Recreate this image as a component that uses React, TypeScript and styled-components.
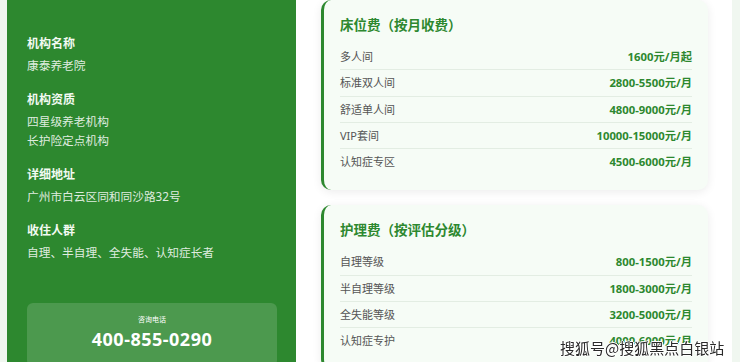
import React from 'react'
import styled, { createGlobalStyle } from 'styled-components'

const GlobalStyle = createGlobalStyle`
  html, body {
    margin: 0;
    padding: 0;
    background: #f0f7f0;
    font-family: "Noto Sans", "Noto Sans CJK SC", sans-serif;
    overflow: hidden;
  }
`

const Page = styled.div`
  display: flex;
  height: 362px;
  margin: 0 8px 0 7px;
  background: #ffffff;
`

const Sidebar = styled.aside`
  width: 289px;
  flex: 0 0 auto;
  background: #2d882f;
  padding: 35px 19px 0 20px;
  box-sizing: border-box;
  display: flex;
  flex-direction: column;
`

const InfoBlock = styled.div`
  margin-bottom: 16px;
`

const InfoLabel = styled.div`
  font-size: 12px;
  line-height: 18px;
  font-weight: 700;
  color: #f2faf2;
  margin-bottom: 3px;
`

const InfoValue = styled.div`
  font-size: 11.7px;
  line-height: 19px;
  color: rgba(255, 255, 255, 0.86);
`

const PhoneBox = styled.div`
  margin-top: 25px;
  background: rgba(255, 255, 255, 0.15);
  border-radius: 6px;
  padding: 12px 0 14px;
  text-align: center;
`

const PhoneLabel = styled.div`
  font-size: 7px;
  line-height: 10px;
  color: #ffffff;
`

const PhoneNumber = styled.div`
  font-size: 18px;
  line-height: 26px;
  font-weight: 700;
  color: #ffffff;
  letter-spacing: 0.5px;
  margin-top: 1px;
`

const Content = styled.main`
  flex: 1;
  padding: 0 24px 0 25px;
  display: flex;
  flex-direction: column;
  gap: 15px;
`

const Card = styled.section`
  background: #f6fcf6;
  border-left: 3px solid #2d882f;
  border-radius: 10px;
  box-shadow: 0 2px 10px rgba(0, 0, 0, 0.08);
  padding: 15px 16px 16px 16px;
`

const CardTitle = styled.h3`
  margin: 0 0 9px;
  font-size: 13.5px;
  line-height: 20px;
  font-weight: 700;
  color: #2d882f;
`

const Row = styled.div`
  display: flex;
  justify-content: space-between;
  align-items: center;
  padding: 6px 0;
  line-height: 13.25px;
  font-size: 11px;
  border-bottom: 1px solid #e3ede3;

  &:last-child {
    border-bottom: none;
  }
`

const RowName = styled.span`
  color: #555555;
`

const RowPrice = styled.span`
  color: #2d882f;
  font-weight: 700;
  font-size: 11.3px;
`

const Watermark = styled.div`
  position: fixed;
  left: 560px;
  top: 337px;
  font-size: 15px;
  line-height: 22px;
  color: #2a2a2a;
  font-family: "Noto Sans CJK SC", sans-serif;
  text-shadow: 1px 0 0 #fff, -1px 0 0 #fff, 0 1px 0 #fff, 0 -1px 0 #fff;
  white-space: nowrap;
`

const info = [
  { label: '机构名称', values: ['康泰养老院'] },
  { label: '机构资质', values: ['四星级养老机构', '长护险定点机构'] },
  { label: '详细地址', values: ['广州市白云区同和同沙路32号'] },
  { label: '收住人群', values: ['自理、半自理、全失能、认知症长者'] },
]

const bedFees = [
  ['多人间', '1600元/月起'],
  ['标准双人间', '2800-5500元/月'],
  ['舒适单人间', '4800-9000元/月'],
  ['VIP套间', '10000-15000元/月'],
  ['认知症专区', '4500-6000元/月'],
]

const careFees = [
  ['自理等级', '800-1500元/月'],
  ['半自理等级', '1800-3000元/月'],
  ['全失能等级', '3200-5000元/月'],
  ['认知症专护', '4000-6000元/月'],
]

function FeeCard({ title, rows }: { title: string; rows: string[][] }) {
  return (
    <Card>
      <CardTitle>{title}</CardTitle>
      {rows.map(([name, price]) => (
        <Row key={name}>
          <RowName>{name}</RowName>
          <RowPrice>{price}</RowPrice>
        </Row>
      ))}
    </Card>
  )
}

export default function App() {
  return (
    <>
      <GlobalStyle />
      <Page>
        <Sidebar>
          {info.map((item) => (
            <InfoBlock key={item.label}>
              <InfoLabel>{item.label}</InfoLabel>
              {item.values.map((v) => (
                <InfoValue key={v}>{v}</InfoValue>
              ))}
            </InfoBlock>
          ))}
          <PhoneBox>
            <PhoneLabel>咨询电话</PhoneLabel>
            <PhoneNumber>400-855-0290</PhoneNumber>
          </PhoneBox>
        </Sidebar>
        <Content>
          <FeeCard title="床位费（按月收费）" rows={bedFees} />
          <FeeCard title="护理费（按评估分级）" rows={careFees} />
        </Content>
      </Page>
      <Watermark>搜狐号@搜狐黑点白银站</Watermark>
    </>
  )
}
